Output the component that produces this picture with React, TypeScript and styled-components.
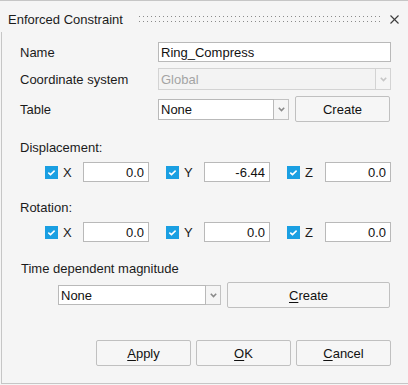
import React from 'react';
import styled, { createGlobalStyle } from 'styled-components';

const GlobalStyle = createGlobalStyle`
  html, body { margin: 0; padding: 0; background: #f5f5f5; }
  body { font-family: "Liberation Sans", Arial, sans-serif; font-size: 13px; color: #1b1b1b; }
  * { box-sizing: border-box; }
`;

const Window = styled.div`
  width: 408px;
  height: 384px;
  border-top: 1px solid #c6c6c6;
  background: #f5f5f5;
  display: flex;
  flex-direction: column;
`;

const TitleBar = styled.div`
  height: 31px;
  flex: none;
  display: flex;
  align-items: flex-start;
  padding: 11px 0 0 8px;
`;

const Title = styled.span`
  line-height: 15px;
  width: 115px;
  white-space: nowrap;
`;

const Grip = styled.svg`
  margin: 3px 0 0 15px;
  display: block;
`;

const CloseIcon = styled.svg`
  margin: 3px 0 0 8px;
  display: block;
`;

const Body = styled.div`
  flex: 1;
  margin-left: 1px;
  border-left: 1px solid #c6c6c6;
  border-bottom: 1px solid #c6c6c6;
  padding: 10px 17px 0 18px;
  display: flex;
  flex-direction: column;
`;

const FieldRow = styled.div<{ $h: number; $mt: number }>`
  display: grid;
  grid-template-columns: 138px 1fr;
  align-items: center;
  height: ${p => p.$h}px;
  margin-top: ${p => p.$mt}px;
`;

const Label = styled.span`
  line-height: 15px;
  white-space: nowrap;
`;

const SectionLabel = styled.div<{ $mt: number; $indent?: number }>`
  line-height: 15px;
  margin-top: ${p => p.$mt}px;
  padding-left: ${p => p.$indent ?? 0}px;
  white-space: nowrap;
`;

const TextInput = styled.input<{ $align?: string; $w?: number }>`
  display: block;
  width: ${p => (p.$w ? `${p.$w}px` : '100%')};
  height: 20px;
  border: 1px solid #b9b9b9;
  background: #fff;
  font-family: "Liberation Sans", Arial, sans-serif;
  font-size: 13px;
  color: #111;
  padding: 0 ${p => (p.$align === 'right' ? '4px' : '2px')} 0 2px;
  text-align: ${p => p.$align ?? 'left'};
  outline: none;
  margin: 0;
`;

const Combo = styled.div<{ $w?: number; $h: number }>`
  display: flex;
  width: ${p => (p.$w ? `${p.$w}px` : '100%')};
  height: ${p => p.$h}px;
`;

const ComboField = styled.div<{ $disabled?: boolean }>`
  flex: 1;
  display: flex;
  align-items: center;
  padding-left: 2px;
  border: 1px solid ${p => (p.$disabled ? '#d3d3d3' : '#b9b9b9')};
  background: ${p => (p.$disabled ? '#f3f3f3' : '#fff')};
  color: ${p => (p.$disabled ? '#a4a4a4' : '#111')};
  white-space: nowrap;
`;

const ComboArrow = styled.div<{ $disabled?: boolean }>`
  width: 15px;
  flex: none;
  display: flex;
  align-items: center;
  justify-content: center;
  border: 1px solid ${p => (p.$disabled ? '#d3d3d3' : '#c2c2c2')};
  border-left: none;
  background: #f5f5f5;
  color: ${p => (p.$disabled ? '#c6c6c6' : '#8a8a8a')};
`;

const Button = styled.button<{ $w?: number }>`
  width: ${p => (p.$w ? `${p.$w}px` : '100%')};
  height: 26px;
  border: 1px solid #c0c0c0;
  border-radius: 2px;
  background: #f6f6f6;
  font-family: "Liberation Sans", Arial, sans-serif;
  font-size: 13px;
  color: #111;
  padding: 0;
  margin: 0;
  flex: none;
  u { text-underline-offset: 2px; }
`;

const TableControls = styled.div`
  display: flex;
  align-items: center;
  gap: 6px;
`;

const AxisRow = styled.div`
  display: flex;
  justify-content: space-between;
  height: 20px;
  margin-top: 7px;
  padding-left: 25px;
`;

const AxisGroup = styled.div`
  width: 104px;
  display: flex;
  align-items: center;
`;

const CheckBox = styled.span`
  width: 13px;
  height: 13px;
  background: #1a9fe2;
  display: flex;
  align-items: center;
  justify-content: center;
  flex: none;
`;

const AxisName = styled.span`
  margin-left: 5px;
  line-height: 15px;
`;

const AxisInputWrap = styled.div`
  margin-left: auto;
`;

const TimeRow = styled.div`
  display: flex;
  align-items: center;
  gap: 6px;
  height: 26px;
  margin-top: 6px;
  padding-left: 38px;
`;

const Footer = styled.div`
  display: flex;
  justify-content: flex-end;
  gap: 5px;
  margin-top: 32px;
`;

const Chevron: React.FC = () => (
  <svg width="7" height="5" viewBox="0 0 7 5">
    <polyline points="0.8,0.8 3.5,3.6 6.2,0.8" fill="none" stroke="currentColor" strokeWidth="1.6" />
  </svg>
);

const Check: React.FC = () => (
  <svg width="13" height="13" viewBox="0 0 13 13">
    <polyline points="3.3,6.6 5.5,8.6 9.6,4.6" fill="none" stroke="#fff" strokeWidth="1.5" />
  </svg>
);

const ComboBox: React.FC<{ value: string; w?: number; h: number; disabled?: boolean }> = ({ value, w, h, disabled }) => (
  <Combo $w={w} $h={h}>
    <ComboField $disabled={disabled}>{value}</ComboField>
    <ComboArrow $disabled={disabled}>
      <Chevron />
    </ComboArrow>
  </Combo>
);

const Axis: React.FC<{ name: string; value: string }> = ({ name, value }) => (
  <AxisGroup>
    <CheckBox>
      <Check />
    </CheckBox>
    <AxisName>{name}</AxisName>
    <AxisInputWrap>
      <TextInput $w={66} $align="right" readOnly value={value} />
    </AxisInputWrap>
  </AxisGroup>
);

const dots: React.ReactNode[] = [];
for (let x = 1; x < 244; x += 4) {
  dots.push(<rect key={`a${x}`} x={x} y={1} width={1} height={1} fill="#8a8a8a" />);
  dots.push(<rect key={`b${x}`} x={x} y={6} width={1} height={1} fill="#8a8a8a" />);
}

export default function App() {
  return (
    <>
      <GlobalStyle />
      <Window>
        <TitleBar>
          <Title>Enforced Constraint</Title>
          <Grip width="244" height="9" viewBox="0 0 244 9">
            {dots}
          </Grip>
          <CloseIcon width="9" height="9" viewBox="0 0 9 9">
            <line x1="0.5" y1="0.5" x2="8.5" y2="8.5" stroke="#3a3a3a" strokeWidth="1.1" />
            <line x1="8.5" y1="0.5" x2="0.5" y2="8.5" stroke="#3a3a3a" strokeWidth="1.1" />
          </CloseIcon>
        </TitleBar>
        <Body>
          <FieldRow $h={20} $mt={0}>
            <Label>Name</Label>
            <TextInput readOnly value="Ring_Compress" />
          </FieldRow>
          <FieldRow $h={22} $mt={6}>
            <Label>Coordinate system</Label>
            <ComboBox value="Global" h={22} disabled />
          </FieldRow>
          <FieldRow $h={26} $mt={6}>
            <Label>Table</Label>
            <TableControls>
              <ComboBox value="None" w={131} h={21} />
              <Button $w={95}>Create</Button>
            </TableControls>
          </FieldRow>

          <SectionLabel $mt={18}>Displacement:</SectionLabel>
          <AxisRow>
            <Axis name="X" value="0.0" />
            <Axis name="Y" value="-6.44" />
            <Axis name="Z" value="0.0" />
          </AxisRow>

          <SectionLabel $mt={18}>Rotation:</SectionLabel>
          <AxisRow>
            <Axis name="X" value="0.0" />
            <Axis name="Y" value="0.0" />
            <Axis name="Z" value="0.0" />
          </AxisRow>

          <SectionLabel $mt={19} $indent={1}>Time dependent magnitude</SectionLabel>
          <TimeRow>
            <ComboBox value="None" w={163} h={20} />
            <Button $w={163}>
              <u>C</u>reate
            </Button>
          </TimeRow>

          <Footer>
            <Button $w={95}>
              <u>A</u>pply
            </Button>
            <Button $w={95}>
              <u>O</u>K
            </Button>
            <Button $w={95}>
              <u>C</u>ancel
            </Button>
          </Footer>
        </Body>
      </Window>
    </>
  );
}
